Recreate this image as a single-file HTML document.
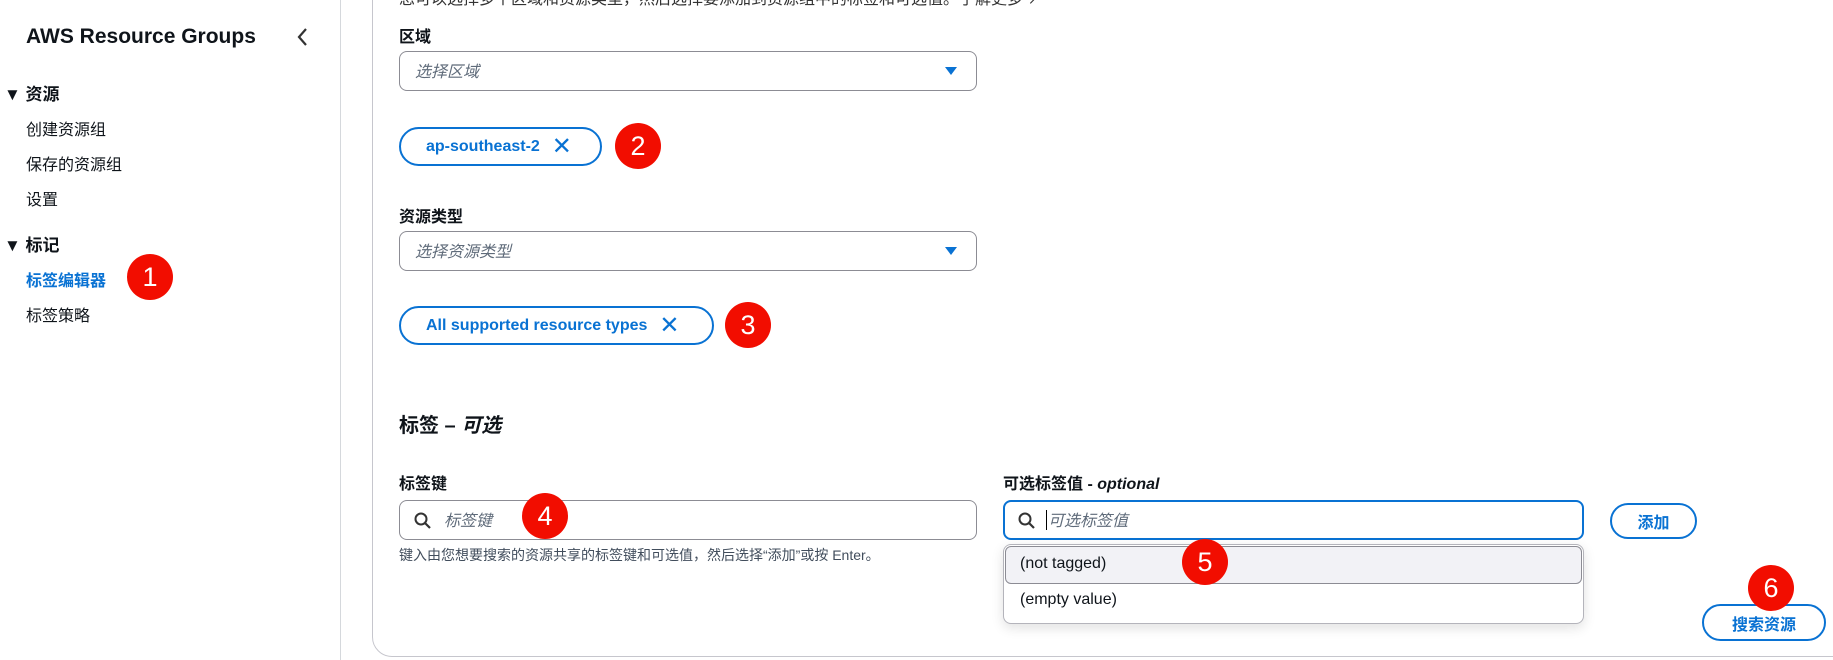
<!DOCTYPE html>
<html><head><meta charset="utf-8"><style>
body{margin:0;width:1833px;height:660px;overflow:hidden;background:#fff;font-family:"Liberation Sans","Noto Sans CJK SC",sans-serif;color:#0f141a;position:relative}
.a{position:absolute;white-space:nowrap}
.side{font-size:16px;left:26px}
.lbl{font-size:16px;font-weight:bold}
.box{position:absolute;border:1px solid #8c8c94;border-radius:8px;background:#fff;box-sizing:border-box}
.ph{font-style:italic;color:#5f6b7a;font-size:16px}
.tok{position:absolute;border:2px solid #0972d3;border-radius:20px;box-sizing:border-box;color:#0972d3;font-weight:bold;font-size:16px;display:flex;align-items:center;padding-left:25px}
.badge{position:absolute;width:46px;height:46px;border-radius:50%;background:#f20d00;color:#fff;font-size:27px;display:flex;align-items:center;justify-content:center;transform:translate(-23px,-23px)}
.btn{position:absolute;border:2px solid #0972d3;border-radius:20px;box-sizing:border-box;color:#0972d3;font-weight:bold;font-size:16px;display:flex;align-items:center;justify-content:center}
.tri{position:absolute;width:0;height:0;border-left:6px solid transparent;border-right:6px solid transparent;border-top:8px solid #0972d3}
</style></head><body>
<div class="a" style="left:26px;top:25px;font-size:21px;font-weight:bold">AWS Resource Groups</div>
<svg class="a" style="left:296px;top:27px" width="14" height="20"><path d="M10 2 L3 10 L10 18" stroke="#333" stroke-width="2.2" fill="none"/></svg>
<div class="a" style="left:4px;top:80px;font-size:17px;font-weight:bold">▼ 资源</div>
<div class="a side" style="top:116px">创建资源组</div>
<div class="a side" style="top:151px">保存的资源组</div>
<div class="a side" style="top:186px">设置</div>
<div class="a" style="left:4px;top:231px;font-size:17px;font-weight:bold">▼ 标记</div>
<div class="a side" style="top:267px;color:#0972d3;font-weight:bold">标签编辑器</div>
<div class="a side" style="top:302px">标签策略</div>
<div class="badge" style="left:150px;top:277px">1</div>
<div class="a" style="left:340px;top:0;width:1px;height:660px;background:#d5d8dc"></div>
<div class="a" style="left:372px;top:-20px;width:1500px;height:677px;border:1px solid #c6c6cd;border-radius:20px;box-sizing:border-box"></div>
<div class="a" style="left:399px;top:-15px;font-size:16px;color:#333">您可以选择多个区域和资源类型，然后选择要添加到资源组中的标签和可选值。了解更多 ↗</div>

<div class="a lbl" style="left:399px;top:23px">区域</div>
<div class="box" style="left:399px;top:51px;width:578px;height:40px"><span class="a ph" style="left:15px;top:6px">选择区域</span></div>
<div class="tri" style="left:945px;top:67px"></div>
<div class="tok" style="left:399px;top:127px;width:203px;height:39px">ap-southeast-2<span style="font-size:24px;font-weight:normal;margin-left:12px">✕</span></div>
<div class="badge" style="left:638px;top:146px">2</div>

<div class="a lbl" style="left:399px;top:203px">资源类型</div>
<div class="box" style="left:399px;top:231px;width:578px;height:40px"><span class="a ph" style="left:15px;top:6px">选择资源类型</span></div>
<div class="tri" style="left:945px;top:247px"></div>
<div class="tok" style="left:399px;top:306px;width:315px;height:39px">All supported resource types<span style="font-size:24px;font-weight:normal;margin-left:12px">✕</span></div>
<div class="badge" style="left:748px;top:325px">3</div>

<div class="a" style="left:399px;top:409px;font-size:20px;font-weight:bold">标签 – <i>可选</i></div>

<div class="a lbl" style="left:399px;top:470px">标签键</div>
<div class="box" style="left:399px;top:500px;width:578px;height:40px">
<svg class="a" style="left:14px;top:11px" width="18" height="18"><circle cx="7" cy="7" r="5.5" stroke="#333" stroke-width="2" fill="none"/><path d="M11 11 L16 16" stroke="#333" stroke-width="2.2"/></svg>
<span class="a ph" style="left:44px;top:6px">标签键</span></div>
<div class="badge" style="left:545px;top:516px">4</div>
<div class="a" style="left:399px;top:545px;font-size:14px;color:#414d5c">键入由您想要搜索的资源共享的标签键和可选值，然后选择“添加”或按 Enter。</div>

<div class="a lbl" style="left:1003px;top:470px">可选标签值 - <i>optional</i></div>
<div class="box" style="left:1003px;top:500px;width:581px;height:40px;border:2px solid #0972d3">
<svg class="a" style="left:13px;top:10px" width="18" height="18"><circle cx="7" cy="7" r="5.5" stroke="#333" stroke-width="2" fill="none"/><path d="M11 11 L16 16" stroke="#333" stroke-width="2.2"/></svg>
<span class="a" style="left:41px;top:8px;width:1px;height:20px;background:#000"></span>
<span class="a ph" style="left:43px;top:5px">可选标签值</span></div>
<div class="btn" style="left:1610px;top:503px;width:87px;height:36px">添加</div>

<div class="box" style="left:1003px;top:544px;width:581px;height:80px;border-color:#b4b4bb;box-shadow:0 4px 12px rgba(0,0,0,.12)">
<div class="a" style="left:1px;top:1px;right:1px;height:36px;background:#f2f2f6;border:1px solid #8c8c94;border-radius:6px"></div>
<span class="a" style="left:16px;top:10px;font-size:16px">(not tagged)</span>
<span class="a" style="left:16px;top:46px;font-size:16px">(empty value)</span></div>
<div class="badge" style="left:1205px;top:562px">5</div>

<div class="btn" style="left:1702px;top:604px;width:124px;height:37px">搜索资源</div>
<div class="badge" style="left:1771px;top:588px">6</div>
</body></html>
